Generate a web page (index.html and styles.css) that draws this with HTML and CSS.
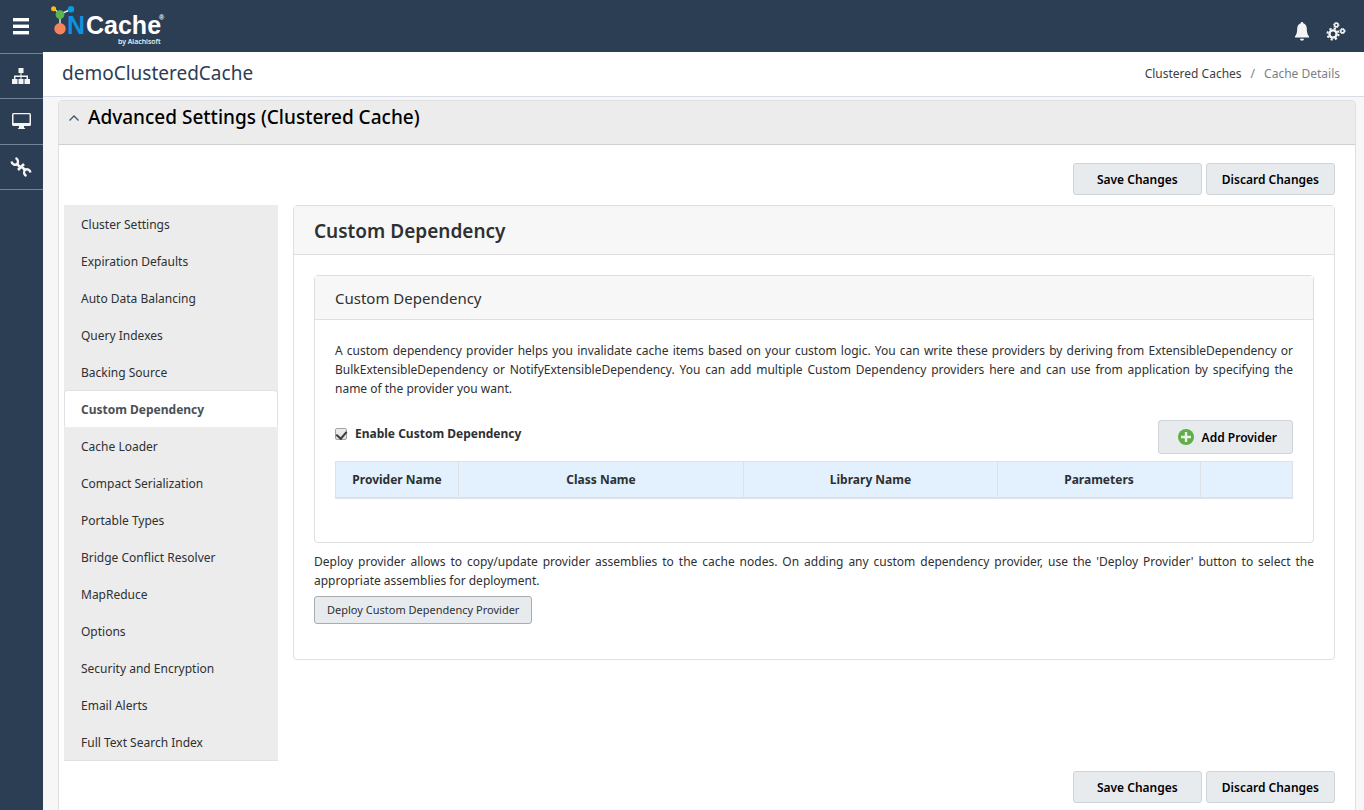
FILE: index.html
```
<!DOCTYPE html>
<html lang="en">
<head>
<meta charset="utf-8">
<title>NCache - demoClusteredCache</title>
<link rel="stylesheet" href="styles.css">
</head>
<body>
<header class="topbar">
  <button class="icon-button menu-button" type="button" aria-label="Menu">
    <svg width="16" height="17" viewBox="0 0 16 17" fill="#fff"><rect y="0" width="16" height="3.4"/><rect y="6.6" width="16" height="3.4"/><rect y="13" width="16" height="3.4"/></svg>
  </button>
  <a class="logo" href="#" aria-label="NCache by Alachisoft">
    <svg width="118" height="48" viewBox="0 0 118 48">
      <path d="M4 6.500 10 12.500 20.500 7.500M10 12.500V26" fill="none" stroke="#e4eaee" stroke-width="1.400"/>
      <circle cx="3.600" cy="6.700" r="2.500" fill="#fdb913"/>
      <circle cx="21" cy="7.300" r="3.200" fill="#0a9ade"/>
      <circle cx="10" cy="12.600" r="4.400" fill="#5cb54c"/>
      <circle cx="10" cy="26.800" r="5.700" fill="#f58458"/>
      <text class="logo-n" x="17" y="32">N</text>
      <text class="logo-name" x="36" y="32">Cache</text>
      <text class="logo-mark" x="109" y="18">®</text>
      <text class="logo-by" x="68" y="42">by Alachisoft</text>
    </svg>
  </a>
  <div class="topbar-actions">
    <button class="icon-button" type="button" aria-label="Notifications">
      <svg width="14" height="19" viewBox="0 0 14 19" fill="#f4f4f4"><path d="M7 0c.8 0 1.200.5 1.200 1.300C10.600 2 11.800 4 11.800 6.500c0 4 .7 6 2.200 7.800v1.200H0v-1.200c1.500-1.800 2.200-3.800 2.200-7.800C2.200 4 3.400 2 5.800 1.300 5.800.5 6.200 0 7 0ZM5 16.700h4c0 1.200-.9 2-2 2s-2-.8-2-2Z"/></svg>
    </button>
    <button class="icon-button" type="button" aria-label="Settings">
      <svg width="20" height="19" viewBox="0 0 20 19" fill="none" stroke="#f4f4f4">
        <circle cx="7" cy="12" r="3.600" stroke-width="2.400"/>
        <circle cx="7" cy="12" r="5.600" stroke-width="1.900" stroke-dasharray="2.200 2.198"/>
        <circle cx="10.300" cy="3" r="1.800" stroke-width="1.500"/>
        <circle cx="10.300" cy="3" r="2.700" stroke-width="1" stroke-dasharray="1.060 1.060"/>
        <circle cx="16.500" cy="9" r="1.800" stroke-width="1.500"/>
        <circle cx="16.500" cy="9" r="2.700" stroke-width="1" stroke-dasharray="1.060 1.060"/>
      </svg>
    </button>
  </div>
</header>
<div class="shell">
  <nav class="rail" aria-label="Main">
    <a href="#" aria-label="Clusters">
      <svg width="18" height="17" viewBox="0 0 18 17" fill="#f4f4f4"><path d="M6.500 0h5v5h-2v2.500H16V11h2v5h-5.500v-5h2V9H9.500v2h2v5h-5v-5h2V9h-5v2h2v5H0v-5h2V7.500h6.500V5h-2Z"/></svg>
    </a>
    <a href="#" aria-label="Monitor">
      <svg width="19" height="17" viewBox="0 0 19 17" fill="#f4f4f4"><path fill-rule="evenodd" d="M1.500 0h16Q19 0 19 1.500v10q0 1.500-1.500 1.500H12v1.500l1.500 1.500h-8L7 14.500V13H1.500Q0 13 0 11.500v-10Q0 0 1.500 0Zm0 1.300v8.700h16V1.300Z"/></svg>
    </a>
    <a href="#" aria-label="Tools">
      <svg width="22" height="22" viewBox="0 0 22 22" fill="none" stroke="#f4f4f4"><path stroke-width="2.600" d="M7 8l3.500 3.500-2.500 2.500M15 14l-3.500-3.500 2.500-2.500"/><path stroke-width="2.400" d="M1.500 5.500c.5 2.500 3.500 4.200 5.500 2.500 2-2 .8-5-1.500-6M20.500 16.500c-.5-2.500-3.500-4.200-5.500-2.500-2 2-.8 5 1.500 6"/></svg>
    </a>
  </nav>
  <main class="main">
    <div class="titlebar">
      <h1>demoClusteredCache</h1>
      <nav class="crumbs" aria-label="Breadcrumb"><a href="#">Clustered Caches</a><span>/</span><span>Cache Details</span></nav>
    </div>
    <section class="panel">
      <h2 class="panel-head">
        <button class="collapse" type="button" aria-label="Collapse"><svg width="10" height="6" viewBox="0 0 10 6" fill="none" stroke="#44546a" stroke-width="1.300"><path d="M.5 5.500 5 1l4.500 4.500"/></svg></button>
        Advanced Settings (Clustered Cache)
      </h2>
      <div class="panel-body">
        <div class="actions"><button class="btn" type="button">Save Changes</button><button class="btn" type="button">Discard Changes</button></div>
        <div class="columns">
          <nav class="tabs" aria-label="Settings sections">
            <a href="#">Cluster Settings</a>
            <a href="#">Expiration Defaults</a>
            <a href="#">Auto Data Balancing</a>
            <a href="#">Query Indexes</a>
            <a href="#">Backing Source</a>
            <a class="active" href="#" aria-current="page">Custom Dependency</a>
            <a href="#">Cache Loader</a>
            <a href="#">Compact Serialization</a>
            <a href="#">Portable Types</a>
            <a href="#">Bridge Conflict Resolver</a>
            <a href="#">MapReduce</a>
            <a href="#">Options</a>
            <a href="#">Security and Encryption</a>
            <a href="#">Email Alerts</a>
            <a href="#">Full Text Search Index</a>
          </nav>
          <section class="card">
            <h3 class="card-head">Custom Dependency</h3>
            <div class="card-body">
              <section class="card">
                <h4 class="subcard-head">Custom Dependency</h4>
                <div class="subcard-body">
                  <p>A custom dependency provider helps you invalidate cache items based on your custom logic. You can write these providers by deriving from ExtensibleDependency or BulkExtensibleDependency or NotifyExtensibleDependency. You can add multiple Custom Dependency providers here and can use from application by specifying the name of the provider you want.</p>
                  <div class="enable-row">
                    <label class="check"><input type="checkbox" checked>Enable Custom Dependency</label>
                    <button class="btn add" type="button">
                      <svg width="16" height="16" viewBox="0 0 16 16"><circle cx="8" cy="8" r="8" fill="#5fae46"/><path d="M8 3v10M3 8h10" stroke="#edf5ea" stroke-width="2.400"/></svg>
                      Add Provider
                    </button>
                  </div>
                  <table class="providers">
                    <colgroup><col class="c-name"><col class="c-class"><col class="c-lib"><col class="c-param"><col></colgroup>
                    <thead><tr><th>Provider Name</th><th>Class Name</th><th>Library Name</th><th>Parameters</th><th></th></tr></thead>
                  </table>
                </div>
              </section>
              <p class="deploy-note">Deploy provider allows to copy/update provider assemblies to the cache nodes. On adding any custom dependency provider, use the 'Deploy Provider' button to select the appropriate assemblies for deployment.</p>
              <button class="deploy" type="button">Deploy Custom Dependency Provider</button>
            </div>
          </section>
        </div>
        <div class="actions"><button class="btn" type="button">Save Changes</button><button class="btn" type="button">Discard Changes</button></div>
      </div>
    </section>
  </main>
</div>
</body>
</html>
```
FILE: styles.css
```
* { box-sizing: border-box; }

body {
  margin: 0;
  height: 100vh;
  display: flex;
  flex-direction: column;
  font: 12px/19px "Noto Sans", "Open Sans", sans-serif;
  color: #2e3032;
  background: #f7f7f7;
}

h1, h2, h3, h4, p { margin: 0; }
a { color: inherit; text-decoration: none; }
button { font: inherit; color: inherit; cursor: pointer; }
svg { display: block; }

.topbar {
  flex: none;
  height: 52px;
  display: flex;
  align-items: center;
  background: #2c3e54;
}
.icon-button { padding: 0; border: 0; background: none; }
.menu-button { width: 43px; padding-right: 1px; display: flex; justify-content: center; }
.logo { margin-left: 7px; }
.logo text { font-family: "Liberation Sans", sans-serif; font-weight: bold; fill: #fff; }
.logo .logo-n { font-size: 25px; fill: #0a94dc; }
.logo .logo-name { font-size: 25px; }
.logo .logo-mark { font-size: 7px; }
.logo .logo-by { font: 500 7px "Noto Sans", sans-serif; }
.topbar-actions {
  margin-left: auto;
  padding: 10px 18px 0 0;
  display: flex;
  gap: 17px;
}

.shell { flex: 1; min-height: 0; display: flex; }
.rail { flex: none; width: 43px; padding-top: 1px; background: #2c3e54; }
.rail a {
  height: 45px;
  padding-right: 1px;
  display: flex;
  align-items: center;
  justify-content: center;
  border-bottom: 1px solid #71859a;
}
.rail a:first-child { height: 46px; border-top: 1px solid #71859a; }
.rail a:nth-child(2) { height: 46px; }

.main { flex: 1; min-width: 0; overflow-y: auto; scrollbar-width: none; }
.titlebar {
  height: 45px;
  padding: 0 24px 2px 19px;
  display: flex;
  align-items: center;
  justify-content: space-between;
  background: #fff;
  border-bottom: 1px solid #d9dee6;
}
.titlebar h1 { font-size: 19px; font-weight: 400; line-height: 24px; color: #2c3e54; }
.crumbs { display: flex; gap: 9px; color: #7b8187; }
.crumbs a { color: #3b3e41; }

.panel {
  margin: 3px 8px 0 15px;
  background: #fff;
  border: 1px solid #dfdfdf;
  border-radius: 4px;
}
.panel-head {
  height: 44px;
  padding: 0 10px 10px;
  display: flex;
  align-items: center;
  gap: 9px;
  font-size: 19px;
  font-weight: 500;
  color: #000;
  background: #ececec;
  border-bottom: 1px solid #cfcfcf;
}
.collapse { padding: 0; border: 0; background: none; }
.panel-body { padding: 18px 20px 20px 5px; }

.actions { display: flex; justify-content: flex-end; gap: 4px; }
.btn {
  min-width: 129px;
  height: 32px;
  padding: 0 15px;
  font-weight: 600;
  color: #000;
  background: #e8ebee;
  border: 1px solid #ced4da;
  border-radius: 3px;
}

.columns { display: flex; align-items: flex-start; gap: 15px; margin: 10px 0; }
.tabs {
  flex: none;
  width: 214px;
  background: #ececec;
  border-bottom: 1px solid #dee2e6;
}
.tabs a { display: block; height: 37px; padding: 9px 16px 7px; border: 1px solid transparent; }
.tabs .active {
  font-weight: 700;
  color: #495057;
  background: #fff;
  border-color: #dee2e6 #dee2e6 #fff;
  border-radius: 4px 4px 0 0;
}

.card { border: 1px solid #dfdfdf; border-radius: 4px; background: #fff; }
.columns > .card { flex: 1; min-width: 0; }
.card-head, .subcard-head {
  padding: 13px 20px 11px;
  line-height: 24px;
  background: #f7f7f7;
  border-bottom: 1px solid #dfdfdf;
}
.card-head { font-size: 19px; font-weight: 600; }
.subcard-head { padding: 10px 20px 9px; font-size: 15px; font-weight: 400; }
.card-body { padding: 20px 20px 35px; }
.subcard-body { padding: 21px 20px 43px; }
.card p { text-align: justify; }

.enable-row { display: flex; align-items: flex-start; justify-content: space-between; margin: 22px 0 7px; }
.check { display: flex; align-items: center; gap: 8px; margin-top: 4px; font-weight: 700; }
.check input {
  appearance: none;
  display: flex;
  justify-content: center;
  width: 12px;
  height: 12px;
  margin: 0;
  border: 1px solid #a3a3a3;
  border-radius: 2px;
  background: linear-gradient(#ededed, #dedede);
}
.check input:checked::after {
  content: "";
  width: 5px;
  height: 8px;
  border: solid #3a3a3a;
  border-width: 0 2px 2px 0;
  transform: rotate(40deg);
}
.add {
  height: 34px;
  min-width: 135px;
  padding: 0 15px 0 19px;
  display: flex;
  align-items: center;
  justify-content: center;
  gap: 8px;
}

.providers { width: 100%; table-layout: fixed; border-collapse: collapse; }
.providers th {
  height: 36px;
  padding: 1px 0 0;
  background: #e3f1ff;
  border: 1px solid #dee2e6;
  border-bottom-width: 2px;
  font-weight: 700;
}
.c-name { width: 123px; }
.c-class { width: 285px; }
.c-lib { width: 254px; }
.c-param { width: 203px; }

.deploy-note { margin: 9px 0 6px; }
.deploy {
  height: 28px;
  padding: 0 12px;
  font-size: 11px;
  background: #e8ebee;
  border: 1px solid #a9adb0;
  border-radius: 3px;
}
```
